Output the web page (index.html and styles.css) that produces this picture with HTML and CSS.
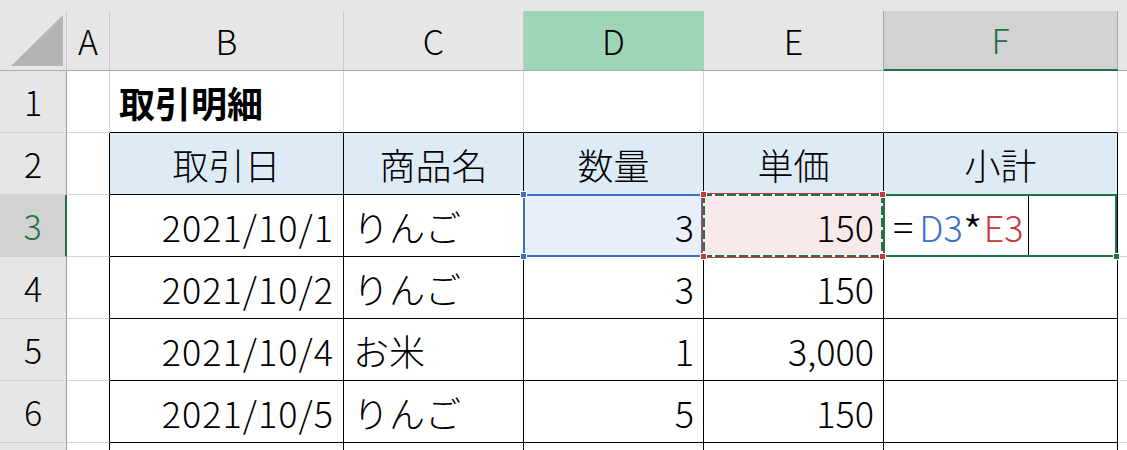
FILE: index.html
```html
<!DOCTYPE html>
<html lang="ja">
<head>
<meta charset="utf-8">
<title>取引明細</title>
<link rel="stylesheet" href="styles.css">
</head>
<body>
<div class="sheet">
  <!-- column headers -->
  <div class="ch"><div class="lab corner-lab"><svg class="tri" width="66" height="59" viewBox="0 0 66 59"><polygon points="63,4 63,55 11,55" fill="#b4b4b4"/></svg></div></div>
  <div class="ch"><div class="lab">A</div></div>
  <div class="ch"><div class="lab">B</div></div>
  <div class="ch"><div class="lab">C</div></div>
  <div class="ch"><div class="lab sel-col">D</div></div>
  <div class="ch"><div class="lab pre-active">E</div></div>
  <div class="ch ch-active"><div class="lab active-col">F</div></div>
  <div class="ch"><div class="lab"></div></div>

  <!-- row 1 -->
  <div class="rh">1</div>
  <div class="c"></div>
  <div class="c tb title">取引明細</div>
  <div class="c tb"></div>
  <div class="c tb"></div>
  <div class="c tb"></div>
  <div class="c tb"></div>
  <div class="c"></div>

  <!-- row 2 -->
  <div class="rh">2</div>
  <div class="c tl"></div>
  <div class="t hd">取引日</div>
  <div class="t hd">商品名</div>
  <div class="t hd">数量</div>
  <div class="t hd">単価</div>
  <div class="t hd">小計</div>
  <div class="c"></div>

  <!-- row 3 -->
  <div class="rh on">3</div>
  <div class="c tl"></div>
  <div class="t r num">2021/10/1</div>
  <div class="t">りんご</div>
  <div class="t r dsel">3<i class="hdl tl-h blue"></i><i class="hdl bl-h blue"></i></div>
  <div class="t r eref">150<i class="hdl tl-h red"></i><i class="hdl bl-h red"></i><i class="hdl tr-h red"></i><i class="hdl br-h red"></i></div>
  <div class="t active"><span class="f-eq">=</span><span class="f-d">D3</span><span class="f-op">*</span><span class="f-e">E3</span><span class="caret"></span><i class="hdl br-h green"></i></div>
  <div class="c"></div>

  <!-- row 4 -->
  <div class="rh">4</div>
  <div class="c tl"></div>
  <div class="t r num">2021/10/2</div>
  <div class="t">りんご</div>
  <div class="t r">3</div>
  <div class="t r">150</div>
  <div class="t"></div>
  <div class="c"></div>

  <!-- row 5 -->
  <div class="rh">5</div>
  <div class="c tl"></div>
  <div class="t r num">2021/10/4</div>
  <div class="t">お米</div>
  <div class="t r">1</div>
  <div class="t r">3,000</div>
  <div class="t"></div>
  <div class="c"></div>

  <!-- row 6 -->
  <div class="rh">6</div>
  <div class="c tl"></div>
  <div class="t r num">2021/10/5</div>
  <div class="t">りんご</div>
  <div class="t r">5</div>
  <div class="t r">150</div>
  <div class="t"></div>
  <div class="c"></div>

  <!-- row 7 (only its top edge is in view) -->
  <div class="rh"></div>
  <div class="c tl"></div>
  <div class="t"></div>
  <div class="t"></div>
  <div class="t"></div>
  <div class="t"></div>
  <div class="t"></div>
  <div class="c"></div>
</div>
</body>
</html>
```

FILE: styles.css
```css
body {
  margin: 0;
  background: #fff;
  font-family: "Noto Sans CJK JP", "Noto Sans", sans-serif;
  font-weight: 300;
  color: #000;
}

.sheet {
  display: grid;
  grid-template-columns: 67px 43px 234px 180px 180px 180px 234px 1fr;
  grid-template-rows: 71px repeat(7, 62px);
  width: 1127px;
  height: 450px;
  overflow: hidden;
}

.sheet > div {
  box-sizing: border-box;
  min-width: 0;
}

/* column headers */
.ch {
  background: #e6e6e6;
  padding-top: 11px;
  border-bottom: 1px solid #ababab;
}
.ch .lab {
  height: 100%;
  box-sizing: border-box;
  border-right: 1px solid #c8c8c8;
  display: flex;
  align-items: center;
  justify-content: center;
  font-size: 34px;
  line-height: 1;
}
.corner-lab {
  align-items: stretch;
}
.tri {
  display: block;
}
.sel-col {
  background: #9fd5b7;
  border-right-color: #9fd5b7 !important;
}
.pre-active {
  border-right-color: #a6a6a6 !important;
}
.ch-active {
  border-bottom-color: #217346;
}
.active-col {
  background: #d2d2d2;
  color: #217346;
  border-right-color: #a6a6a6 !important;
  border-bottom: 1px solid #217346;
}

/* row headers */
.rh {
  background: #e6e6e6;
  border-right: 1px solid #a0a0a0;
  border-bottom: 1px solid #d0d0d0;
  display: flex;
  align-items: center;
  justify-content: center;
  font-size: 34px;
  line-height: 1;
}
.rh.on {
  background: #d2d2d2;
  color: #217346;
  border-right: 2px solid #217346;
}

/* cells */
.c, .t {
  display: flex;
  align-items: center;
  padding: 0 9px;
  font-size: 36px;
  line-height: 1;
  white-space: nowrap;
}
.c {
  border-right: 1px solid #d4d4d4;
  border-bottom: 1px solid #d4d4d4;
}
.c.tl {
  border-right-color: #000;
}
.c.tb {
  border-bottom-color: #000;
}
.t {
  border-right: 1px solid #000;
  border-bottom: 1px solid #000;
}
.t.hd {
  background: #ddebf7;
  justify-content: center;
}
.t.r {
  justify-content: flex-end;
}
.num {
  letter-spacing: 1px;
}
.title {
  font-weight: 700;
}

/* reference D3 */
.dsel {
  position: relative;
  background: #e8eff9;
}
.dsel::after {
  content: "";
  position: absolute;
  left: -1px;
  top: -1px;
  right: 0;
  bottom: -1px;
  border: 2px solid #3b6fc6;
}

/* reference E3 (copy marquee) */
.eref {
  position: relative;
  background: #f9e9ea;
}
.eref::before {
  content: "";
  position: absolute;
  left: -2px;
  top: -2px;
  right: -1px;
  bottom: -2px;
  border: 1px solid #c8373a;
}
.eref::after {
  content: "";
  position: absolute;
  left: -1px;
  top: -1px;
  right: 0;
  bottom: -1px;
  background:
    repeating-linear-gradient(90deg, #217346 0 9px, #fff 9px 12px) left top / 100% 2px no-repeat,
    repeating-linear-gradient(90deg, #217346 0 9px, #fff 9px 12px) left bottom / 100% 2px no-repeat,
    repeating-linear-gradient(180deg, #217346 0 9px, #fff 9px 12px) left top / 2px 100% no-repeat,
    repeating-linear-gradient(180deg, #217346 0 9px, #fff 9px 12px) right top / 2px 100% no-repeat;
}

/* active F3 */
.active {
  position: relative;
}
.active::after {
  content: "";
  position: absolute;
  left: -1px;
  top: -1px;
  right: 0;
  bottom: -1px;
  border: 2px solid #217346;
}
.f-eq {
  font-size: 38px;
}
.f-d {
  color: #3b6fc6;
  margin-left: 6px;
}
.f-op {
  color: #000;
  font-size: 45px;
  line-height: 1;
  position: relative;
  top: 5px;
}
.f-e {
  color: #c8373a;
  margin-left: 1px;
}
.caret {
  align-self: stretch;
  width: 1px;
  background: #000;
  margin-left: 4px;
}

/* corner handles */
.hdl {
  position: absolute;
  width: 5px;
  height: 5px;
  border: 1px solid #fff;
  z-index: 2;
}
.hdl.blue { background: #3b6fc6; }
.hdl.red { background: #c8373a; }
.hdl.green { background: #217346; }
.tl-h { left: -4px; top: -4px; }
.bl-h { left: -4px; bottom: -4px; }
.tr-h { right: -3px; top: -4px; }
.br-h { right: -3px; bottom: -4px; }
```
